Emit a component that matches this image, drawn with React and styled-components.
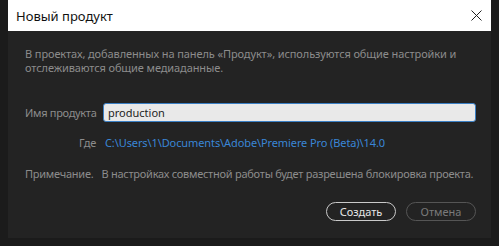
import React from 'react';
import styled, { createGlobalStyle } from 'styled-components';

const GlobalStyle = createGlobalStyle`
  html, body {
    margin: 0;
    padding: 0;
    background: #1b1b1b;
  }
  body {
    font-family: "Noto Sans", "Open Sans", sans-serif;
  }
`;

const Frame = styled.div`
  width: 499px;
  height: 246px;
  box-sizing: border-box;
  padding: 0 8px 8px 8px;
  display: flex;
`;

const Dialog = styled.div`
  flex: 1;
  display: flex;
  flex-direction: column;
  background: #232323;
`;

const TitleBar = styled.div`
  height: 31px;
  background: #ffffff;
  display: flex;
  align-items: center;
  justify-content: space-between;
  padding: 0 9px 0 8px;
`;

const Title = styled.span`
  font-size: 13px;
  color: #111;
`;

const CloseButton = styled.span`
  width: 12px;
  height: 12px;
  display: flex;
  align-items: center;
  justify-content: center;
`;

const Body = styled.div`
  flex: 1;
  display: flex;
  flex-direction: column;
  padding: 16px 15px 0 17px;
`;

const Text = styled.p`
  margin: 0;
  font-size: 11px;
  line-height: 14px;
  letter-spacing: -0.1px;
  color: #8c8c8c;
`;

const Form = styled.div`
  display: grid;
  grid-template-columns: 71px 1fr;
  column-gap: 7px;
  row-gap: 13px;
  align-items: center;
  margin-top: 28px;
`;

const Label = styled.span`
  font-size: 11px;
  line-height: 15px;
  letter-spacing: -0.3px;
  white-space: nowrap;
  color: #8c8c8c;
  text-align: right;
`;

const Input = styled.input`
  box-sizing: border-box;
  height: 19px;
  width: 100%;
  background: #e9e9e9;
  border: 1px solid #3a7fc4;
  border-radius: 3px;
  padding: 0 4px;
  font-family: "Noto Sans", sans-serif;
  font-size: 11px;
  color: #1e1e1e;
  outline: none;
`;

const Path = styled.span`
  font-size: 11px;
  line-height: 15px;
  letter-spacing: -0.1px;
  color: #3a86d6;
  padding-left: 2px;
`;

const Note = styled(Text)`
  margin-top: 17px;
  white-space: nowrap;
  letter-spacing: -0.25px;
  & > span { margin-right: 8px; }
`;

const Actions = styled.div`
  display: flex;
  justify-content: flex-end;
  gap: 10px;
  margin-top: 21px;
`;

const Button = styled.button`
  box-sizing: border-box;
  height: 19px;
  width: 70px;
  border-radius: 10px;
  background: transparent;
  font-family: "Noto Sans", sans-serif;
  font-size: 11px;
  padding: 0;
  border: 1px solid ${p => (p.$primary ? '#c9c9c9' : '#555')};
  color: ${p => (p.$primary ? '#e6e6e6' : '#7a7a7a')};
`;

const CloseIcon = () => (
  <svg width="11" height="11" viewBox="0 0 11 11">
    <path d="M0.5 0.5 L10.5 10.5 M10.5 0.5 L0.5 10.5" stroke="#222" strokeWidth="1" fill="none" />
  </svg>
);

const App = () => (
  <>
    <GlobalStyle />
    <Frame>
      <Dialog>
        <TitleBar>
          <Title>Новый продукт</Title>
          <CloseButton>
            <CloseIcon />
          </CloseButton>
        </TitleBar>
        <Body>
          <Text>
            В проектах, добавленных на панель «Продукт», используются общие настройки и
            <br />
            отслеживаются общие медиаданные.
          </Text>
          <Form>
            <Label>Имя продукта</Label>
            <Input defaultValue="production" />
            <Label>Где</Label>
            <Path>C:\Users\1\Documents\Adobe\Premiere Pro (Beta)\14.0</Path>
          </Form>
          <Note>
            <span>Примечание.</span>В настройках совместной работы будет разрешена блокировка проекта.
          </Note>
          <Actions>
            <Button $primary>Создать</Button>
            <Button>Отмена</Button>
          </Actions>
        </Body>
      </Dialog>
    </Frame>
  </>
);

export default App;
